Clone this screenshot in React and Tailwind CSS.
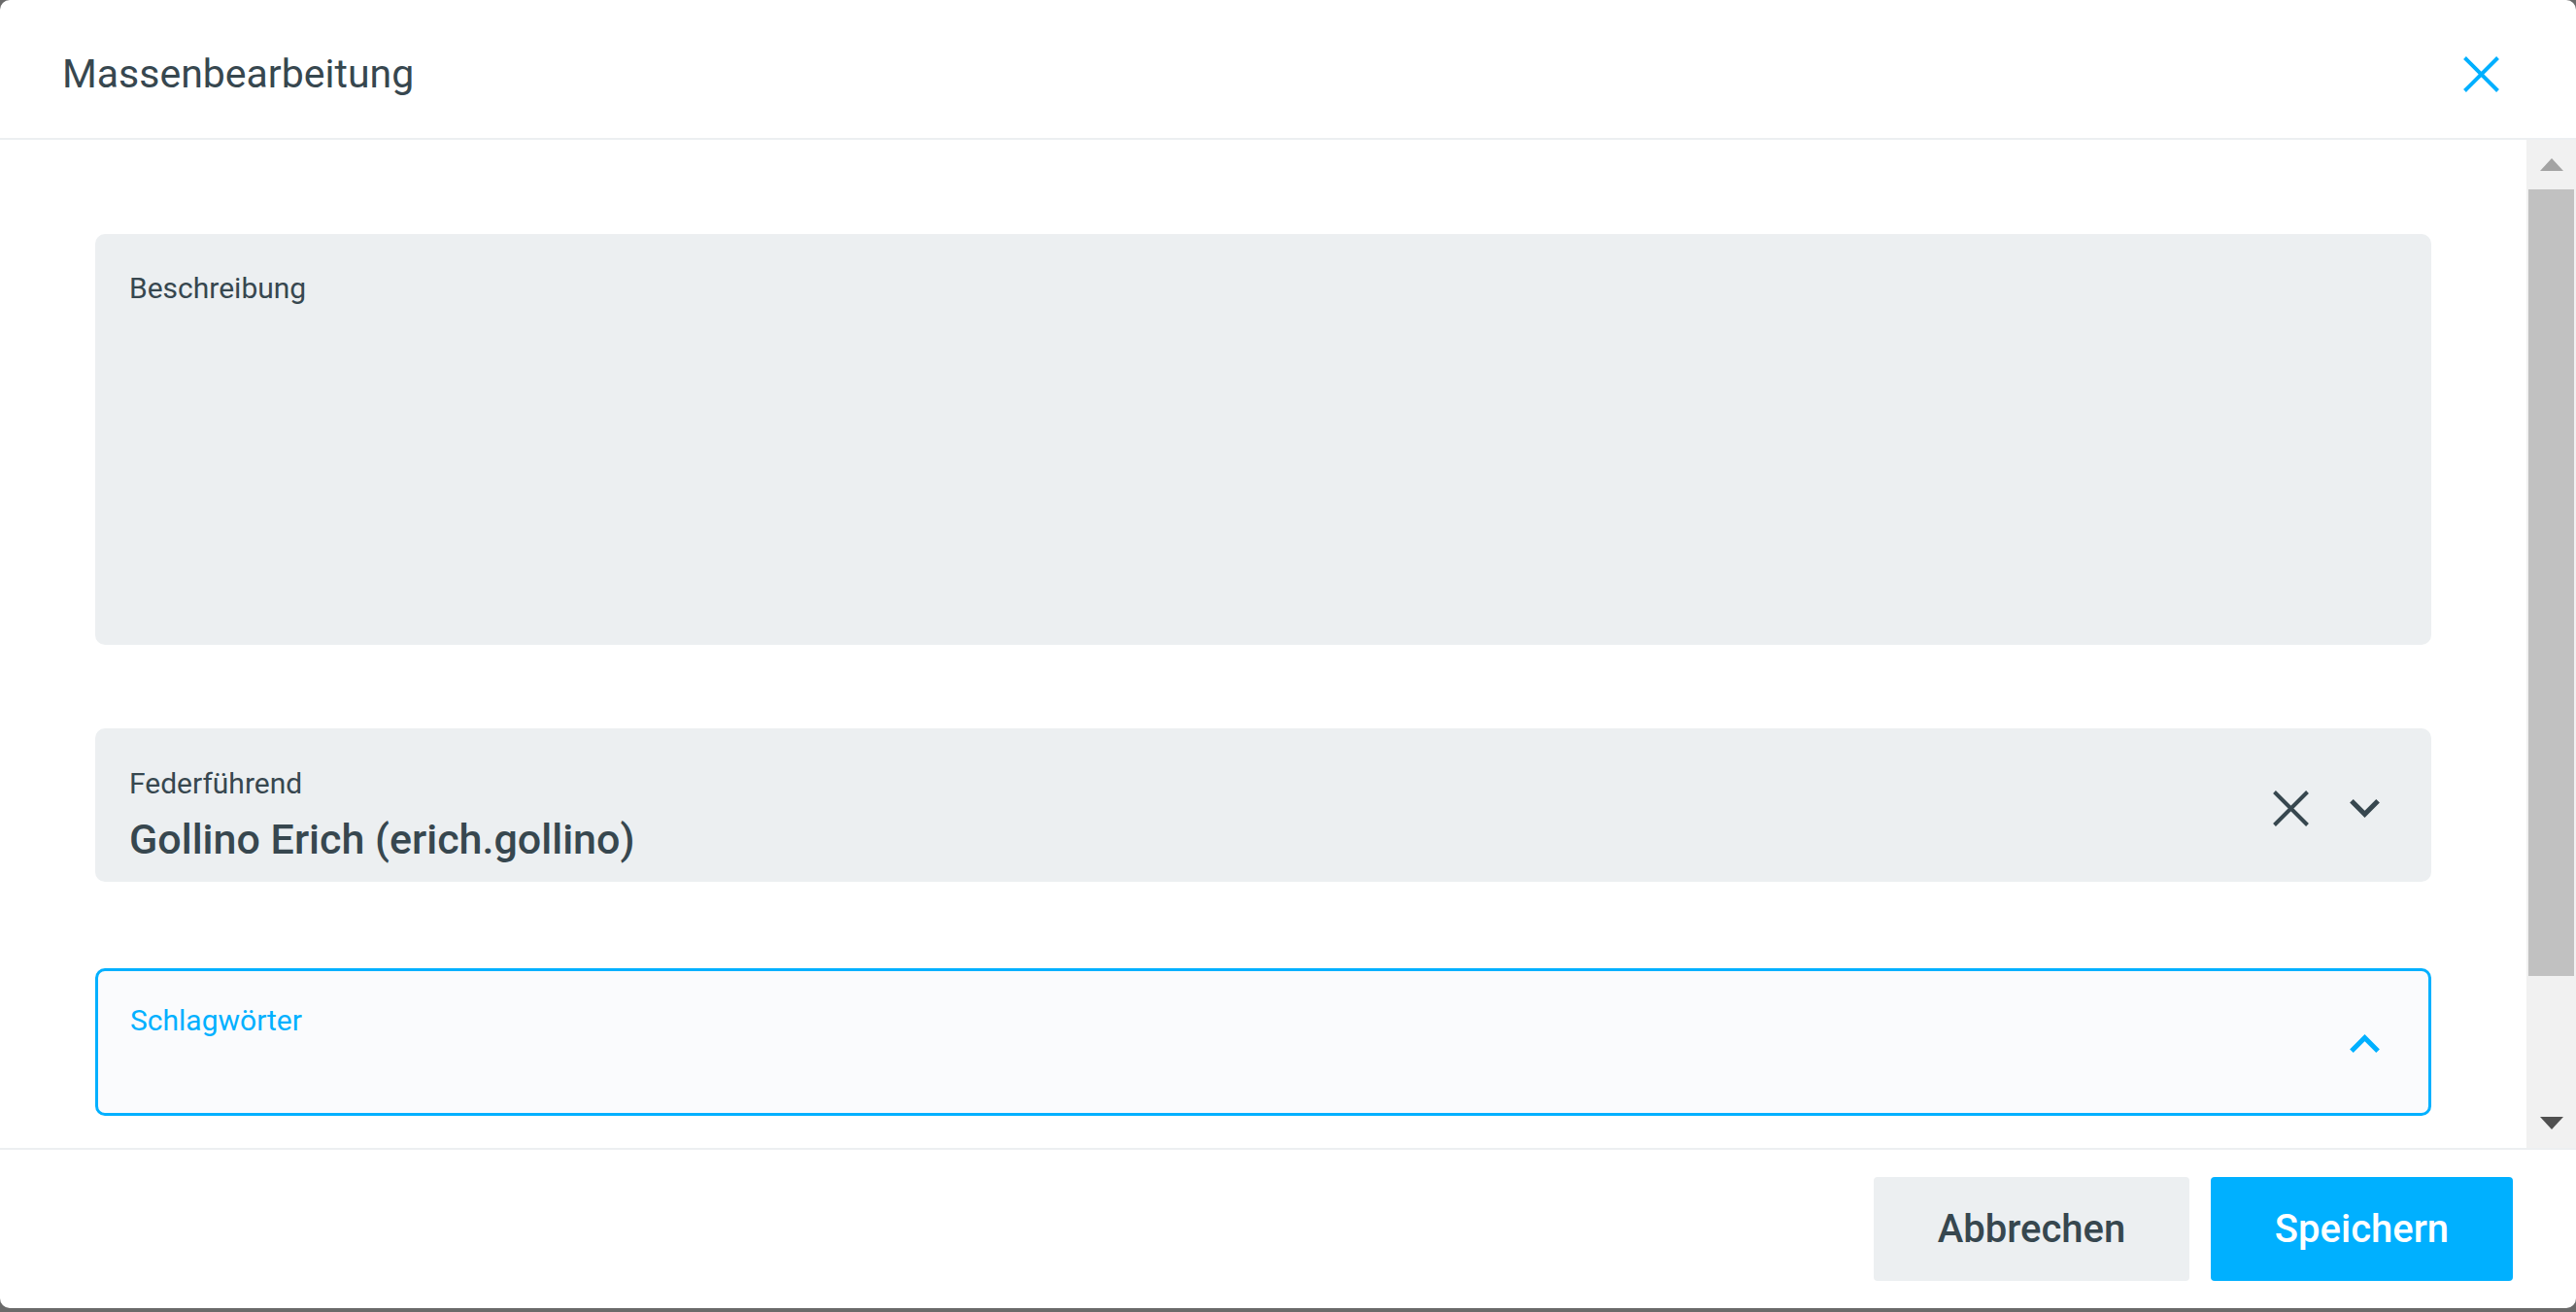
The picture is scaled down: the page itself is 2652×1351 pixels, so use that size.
import React from "react";

const font = { fontFamily: "Roboto, 'Noto Sans', Arial, sans-serif" };

function XIcon({ color }) {
  return (
    <svg width="37" height="37" viewBox="0 0 37 37" fill="none">
      <path d="M1.5 1.5L35.5 35.5M35.5 1.5L1.5 35.5" stroke={color} strokeWidth="4" strokeLinecap="butt" />
    </svg>
  );
}

function ChevronDown({ color }) {
  return (
    <svg width="31" height="19" viewBox="6 8.59 12 7.41">
      <path d="M16.59 8.59L12 13.17 7.41 8.59 6 10l6 6 6-6z" fill={color} />
    </svg>
  );
}

function ChevronUp({ color }) {
  return (
    <svg width="31" height="19" viewBox="6 8 12 7.41">
      <path d="M12 8l-6 6 1.41 1.41L12 10.83l4.59 4.58L18 14z" fill={color} />
    </svg>
  );
}

export default function App() {
  return (
    <div className="w-full h-[1351px] bg-[#6a6a6a] overflow-hidden" style={font}>
      <div className="h-[1347px] bg-white rounded-[10px] overflow-hidden flex flex-col text-[#37474f]">
        {/* Header */}
        <div className="h-[144px] shrink-0 border-b-2 border-[#eceff1] flex items-center justify-between pt-[10px] pl-[64px] pr-[79px]">
          <h1 className="text-[41px] leading-none font-normal">Massenbearbeitung</h1>
          <button className="w-[37px] h-[37px] flex items-center justify-center">
            <XIcon color="#00b0ff" />
          </button>
        </div>

        {/* Body */}
        <div className="h-[1038px] shrink-0 flex">
          <div className="flex-1 pt-[97px] pl-[98px] pr-[98px] flex flex-col">
            <div className="h-[423px] rounded-[10px] bg-[#eceff1] pt-[41px] pl-[35px]">
              <div className="text-[30px] leading-none">Beschreibung</div>
            </div>

            <div className="mt-[86px] h-[158px] rounded-[10px] bg-[#eceff1] flex items-start pl-[35px] pr-[53px]">
              <div className="flex-1 flex flex-col gap-[21px] pt-[42px]">
                <div className="text-[30px] leading-none">Federführend</div>
                <div className="text-[43px] leading-none font-medium">Gollino Erich (erich.gollino)</div>
              </div>
              <div className="self-stretch flex items-center gap-[42px] pt-[6px]">
                <XIcon color="#37474f" />
                <ChevronDown color="#37474f" />
              </div>
            </div>

            <div className="mt-[89px] h-[152px] rounded-[10px] bg-[#fafbfd] border-[3px] border-[#00b0ff] flex pl-[33px] pr-[50px]">
              <div className="flex-1 pt-[36px]">
                <div className="text-[30px] leading-none text-[#00b0ff]">Schlagwörter</div>
              </div>
              <div className="flex items-center pt-[2px]">
                <ChevronUp color="#00b0ff" />
              </div>
            </div>
          </div>

          {/* Scrollbar */}
          <div className="w-[51px] shrink-0 bg-[#f1f1f1] flex flex-col">
            <div className="h-[51px] flex items-center justify-center">
              <div className="w-0 h-0 border-l-[12.5px] border-r-[12.5px] border-b-[13px] border-l-transparent border-r-transparent border-b-[#a3a3a3]" />
            </div>
            <div className="h-[810px] mx-[2px] bg-[#c1c1c1]" />
            <div className="flex-1" />
            <div className="h-[51px] flex items-center justify-center">
              <div className="w-0 h-0 border-l-[12.5px] border-r-[12.5px] border-t-[13px] border-l-transparent border-r-transparent border-t-[#505050]" />
            </div>
          </div>
        </div>

        {/* Footer */}
        <div className="flex-1 border-t-2 border-[#eceff1] flex items-center justify-end gap-[22px] pr-[65px]">
          <button className="w-[325px] h-[107px] rounded-[4px] bg-[#eceff1] text-[40px] font-medium leading-none text-[#37474f]">
            Abbrechen
          </button>
          <button className="w-[311px] h-[107px] rounded-[4px] bg-[#00b0ff] text-[40px] font-medium leading-none text-white">
            Speichern
          </button>
        </div>
      </div>
    </div>
  );
}
